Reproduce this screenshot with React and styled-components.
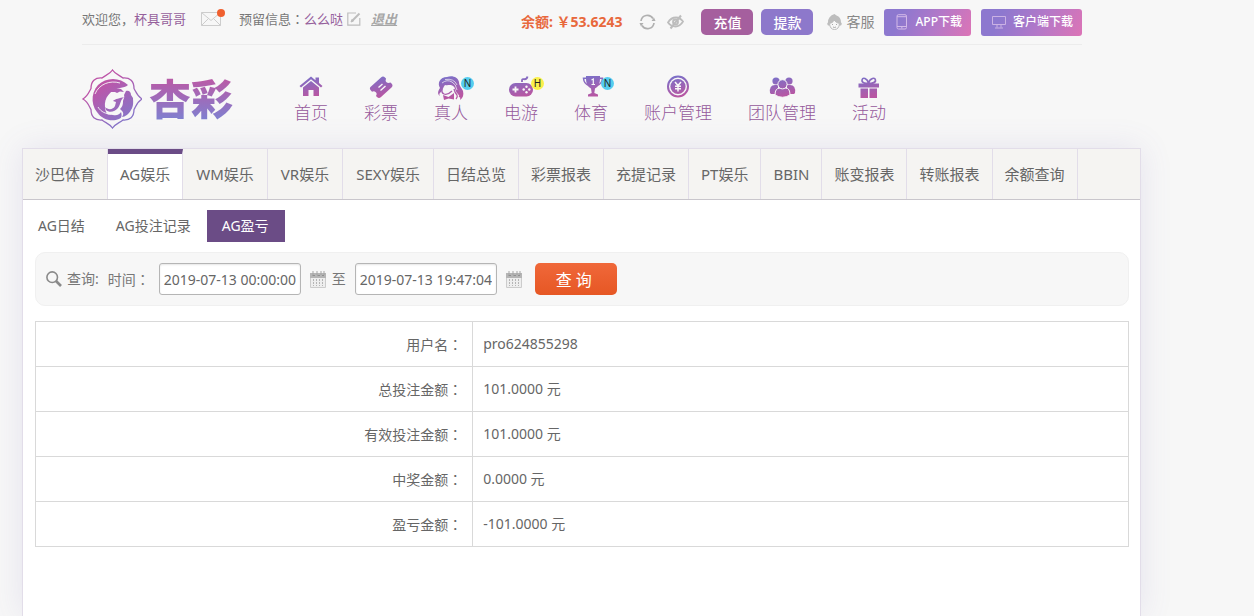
import React from "react";
import styled, { createGlobalStyle } from "styled-components";

const GlobalStyle = createGlobalStyle`
  * {
    box-sizing: border-box;
  }
  body {
    margin: 0;
    background: #f7f7f7;
    color: #666;
    font-family: "Noto Sans", "Noto Sans CJK SC", sans-serif;
    font-size: 14px;
    line-height: 20px;
  }
  a {
    color: inherit;
    text-decoration: none;
  }
  input, button {
    font-family: inherit;
  }
  svg {
    display: block;
    flex: none;
  }
`;

const Page = styled.div`
  display: flex;
  flex-direction: column;
  min-height: 100vh;
  padding: 0 113px 0 22px;
`;

const Header = styled.header`
  padding: 0 59px 0 60px;
`;

const TopBar = styled.div`
  display: flex;
  justify-content: space-between;
  height: 45px;
  border-bottom: 1px solid #ececec;
`;

const UserInfo = styled.div`
  display: flex;
  align-items: center;
  height: 38px;
  font-size: 13px;
  color: #777;
  white-space: nowrap;
`;

// full-width colon, centred in its box
const Colon = styled.span`
  font-family: "Noto Sans CJK TC", sans-serif;
`;

const Name = styled.a`
  color: #96609c;
`;

const MailLink = styled.a`
  position: relative;
  margin: 0 18px 0 15px;
`;

const MailDot = styled.span`
  position: absolute;
  top: -3px;
  right: -4px;
  width: 8px;
  height: 8px;
  border-radius: 50%;
  background: #f0602f;
`;

const EditLink = styled.a`
  margin: 0 10px 0 4px;
`;

const Logout = styled.a`
  font-style: italic;
  font-weight: bold;
  text-decoration: underline;
  color: #a6a6a6;
`;

const Actions = styled.div`
  display: flex;
  align-items: center;
  white-space: nowrap;
`;

const Balance = styled.span`
  margin-right: 17px;
  font-size: 14px;
  font-weight: bold;
  color: #e8683c;
`;

const IconButton = styled.button`
  padding: 0;
  border: 0;
  background: none;
  margin-right: ${props => props.$gap}px;
`;

const MoneyButton = styled.button`
  width: 52px;
  height: 26px;
  padding: 0;
  margin-right: ${props => props.$gap}px;
  border: 0;
  border-radius: 5px;
  background: ${props => props.$bg};
  color: #fff;
  font-size: 14px;
  font-weight: 500;
`;

const Service = styled.a`
  display: flex;
  align-items: center;
  gap: 4px;
  color: #888;
`;

const Download = styled.a`
  display: flex;
  align-items: center;
  gap: 7px;
  height: 27px;
  margin-left: 10px;
  padding: 0 9px 0 11px;
  border-radius: 3px;
  background: linear-gradient(115deg, #8d78cf 20%, #b478c8 60%, #dc74b6);
  color: #fff;
  font-size: 12px;
  font-weight: 500;
`;

const MainBar = styled.div`
  display: flex;
  align-items: flex-start;
  height: 103px;
`;

const Logo = styled.a`
  display: flex;
  align-items: center;
  gap: 7px;
  height: 60px;
  margin: 24px 43px 0 0;
`;

const LogoText = styled.span`
  font-size: 42px;
  line-height: 60px;
  font-weight: 900;
  background: linear-gradient(#b75ca8 20%, #7f80d0 85%);
  background-clip: text;
  -webkit-background-clip: text;
  color: transparent;
`;

const Nav = styled.nav`
  display: flex;
  padding-top: 30px;
`;

const NavItem = styled.a`
  position: relative;
  display: flex;
  flex-direction: column;
  align-items: center;
  padding: 0 18px;
  font-size: 17px;
  font-weight: 300;
  line-height: 24px;
  color: #95589b;
  white-space: nowrap;
`;

const Badge = styled.span`
  position: absolute;
  top: 2px;
  left: 45px;
  width: 13px;
  height: 13px;
  border-radius: 50%;
  background: ${props => (props.$hot ? "#faf04a" : "#55cdee")};
  color: #222;
  font-size: 10px;
  font-weight: 400;
  line-height: 13px;
  text-align: center;
`;

const Panel = styled.main`
  flex: 1;
  border: 1px solid #e2dde9;
  border-bottom: 0;
  background: #fff;
  box-shadow: 0 0 30px rgba(110, 90, 180, 0.13);
`;

const Tabs = styled.nav`
  display: flex;
  height: 51px;
  background: #f5f4f2;
  border-bottom: 1px solid #c9c6cc;
`;

const Tab = styled.a`
  padding: 0 ${props => (props.$wide ? 13 : 12)}px;
  border-right: 1px solid #e2dde9;
  border-top: ${props => (props.$active ? "5px solid #6b4c86" : "0")};
  background: ${props => (props.$active ? "#fff" : "none")};
  font-size: 15px;
  line-height: ${props => (props.$active ? 41 : 51)}px;
  white-space: nowrap;
`;

const SubTabs = styled.nav`
  display: flex;
  padding: 10px 0;
`;

const SubTab = styled.a`
  padding: 0 16px 0 15px;
  line-height: 32px;
  background: ${props => (props.$active ? "#6b4c86" : "none")};
  color: ${props => (props.$active ? "#fff" : "#666")};
`;

const Content = styled.div`
  padding: 0 11px 0 12px;
`;

const SearchBar = styled.form`
  display: flex;
  align-items: center;
  gap: 9px;
  height: 54px;
  padding: 0 10px;
  border: 1px solid #f0f0f0;
  border-radius: 10px;
  background: #f7f7f7;
  color: #777;
`;

const SearchTitle = styled.span`
  display: flex;
  align-items: center;
  gap: 5px;
`;

const DateField = styled.span`
  display: flex;
  align-items: center;
  gap: 9px;
  margin-right: ${props => props.$gap}px;
`;

const DateInput = styled.input`
  width: 142px;
  height: 32px;
  padding: 0 4px;
  border: 1px solid #b5b5b5;
  border-radius: 3px;
  background: #fff;
  box-shadow: inset 0 1px 2px rgba(0, 0, 0, 0.1);
  color: #666;
  font-size: 14px;
  text-align: center;
`;

const SubmitButton = styled.button`
  width: 82px;
  height: 32px;
  padding: 0 4px 0 0;
  border: 0;
  border-radius: 5px;
  background: linear-gradient(#f0683a, #e65724);
  color: #fff;
  font-size: 16px;
`;

const Report = styled.table`
  width: 100%;
  margin-top: 15px;
  border-collapse: collapse;

  th, td {
    height: 45px;
    padding: 0 10px;
    border: 1px solid #d9d9d9;
    font-weight: normal;
  }
  th {
    width: 40%;
    text-align: right;
  }
`;

const Emblem = () => (
  <svg width="60" height="60" viewBox="0 0 60 60">
    <defs>
      <linearGradient id="logo" gradientUnits="userSpaceOnUse" x1="12" y1="6" x2="46" y2="56">
        <stop offset="0.2" stopColor="#bd55a8" />
        <stop offset="1" stopColor="#8079cc" />
      </linearGradient>
    </defs>
    <path
      d="M30.500 1C33 5 37 6 41 9C48 8.500 52 12 52 19.500C54 23 55 27 60 30C55 33 54 37 52 40.500C52 48 48 51.500 41 51C37 54 33 55 30.500 59C28 55 24 54 20 51C13 51.500 9 48 9 40.500C7 37 6 33 1 30C6 27 7 23 9 19.500C9 12 13 8.500 20 9C24 6 28 5 30.500 1Z"
      fill="none"
      stroke="url(#logo)"
      strokeWidth="1.300"
    />
    <g fill="url(#logo)">
      <path d="M46 16C38 8 24 8 16 16C8 25 9 39 18 46C22 49 27 50 31 49C26 47 23 43 23 38C22 29 28 21 38 19C41 18 44 18 46 16Z" />
      <path d="M27 23C30 20 34 19 39 20L42 23L38 22.500L35 24L33 23Z" />
      <path d="M23 38C26 41 31 41 33 37L34 33L31 32C33 30 38 29 42 28C38 31 39 35 36 39C33 43 27 44 24 41Z" />
      <path d="M44 22C47 21 49 23 49 26L51 29C51 32 52 37 49 41C47 45 43 48 40 48C43 44 40 42 38 40C40 38 41 36 41 33C41 30 43 29 42 26Z" />
      <path d="M15 43C19 48 25 44 31 46C35 47 38 45 39 43C40 46 40 49 37 50C30 53 20 51 15 43Z" />
    </g>
    <path d="M13 25C17 15 28 11 38 14M16 38C19 43 24 45 29 45" fill="none" stroke="#f7f7f7" strokeWidth="0.900" />
  </svg>
);

const Gradient = () => (
  <svg width="0" height="0" style={{ position: "absolute" }} aria-hidden="true">
    <linearGradient id="nav" gradientUnits="userSpaceOnUse" x1="0" y1="1" x2="6" y2="24">
      <stop offset="0" stopColor="#7373cd" />
      <stop offset="1" stopColor="#b857a3" />
    </linearGradient>
  </svg>
);

const navIcons = {
  home: (
    <>
      <path d="M2.500 11L14 1.500L18.500 5.200V2.500H22V8L25.500 11L24 12.500L14 4.300L4 12.500Z" />
      <path d="M6 12.500L14 6L22 12.500V21H16.500V15H11.500V21H6Z" />
    </>
  ),
  ticket: (
    <>
      <path d="M14 2.500Q16 .5 18 2.500L19 3.500Q18 6 19.500 7.200Q21 8.500 23.500 7.500L24.500 8.500Q26.500 10.500 24.500 12.500L14 22Q12 23.800 10 22L9 21Q10.500 18.500 8.500 17Q7 15.500 5 16.800L3.500 15Q2 13 4 11.500Z" />
      <path d="M11.500 12.500L15.500 9M13.500 15.500L18.500 11" stroke="#f7f7f7" strokeWidth="1.400" />
    </>
  ),
  girl: (
    <>
      <path d="M3 13C0 8 3 2 10 2C15 0 21 2 22 7C22 11 25 13 26 16C27 20 26 23 23 25C24 22 22 21 21 19C18 17 19 13 16 11C13 9 11 11 8 10C6 12 6 15 4 17C2 18 2 20 3 21C0 19 1 16 3 13Z" />
      <path d="M5 14C5 16 4 18 7 19C10 20 13 18 15 16" fill="none" stroke="url(#nav)" strokeWidth="1.300" />
      <path d="M6 20L11.500 22L17 18V24.500L11.500 23.500L7 25Z" />
      <path d="M17 14Q18 18 20 20Q21 22 19 24M22 17Q25 20 22 22" fill="none" stroke="url(#nav)" strokeWidth="1.300" />
      <path d="M5 8Q10 4 15 7Q19 9 20 15M8 4.500Q17 3 20 10" fill="none" stroke="#f7f7f7" strokeWidth="0.700" />
    </>
  ),
  game: (
    <>
      <path d="M15 7V5.500Q15 3.800 17 4.200Q20 4.500 20.500 1.500" fill="none" stroke="url(#nav)" strokeWidth="1.800" />
      <rect x="2" y="8" width="24" height="13.500" rx="6.500" />
      <path d="M8.500 11.500V17.500M5.500 14.500H11.500" stroke="#f7f7f7" strokeWidth="1.800" />
      <g fill="#f7f7f7">
        <circle cx="19.500" cy="11.700" r="1.200" />
        <circle cx="19.500" cy="17.300" r="1.200" />
        <circle cx="16.700" cy="14.500" r="1.200" />
        <circle cx="22.300" cy="14.500" r="1.200" />
      </g>
    </>
  ),
  cup: (
    <>
      <path d="M9 1H23V4Q23 11 18 13.500L17.300 18L21 19.500V21.500H11V19.500L14.700 18L14 13.500Q9 11 9 4Z" />
      <path d="M9 3.200H6.500Q7 9 12 10.500M23 3.200H25.500Q25 9 20 10.500" fill="none" stroke="url(#nav)" strokeWidth="1.500" />
      <path d="M14.500 5L16.300 4V9.500M14.500 9.500H18" fill="none" stroke="#f7f7f7" strokeWidth="1.200" />
    </>
  ),
  coin: (
    <>
      <circle cx="14" cy="11.500" r="10" fill="none" stroke="url(#nav)" strokeWidth="2" />
      <circle cx="14" cy="11.500" r="7.600" />
      <path d="M11 7L14 10.500L17 7M14 10.500V16.500M11 11.200H17M11 13.700H17" fill="none" stroke="#f7f7f7" strokeWidth="1.500" />
    </>
  ),
  team: (
    <>
      <circle cx="8" cy="6" r="3.600" />
      <circle cx="21" cy="6" r="3.600" />
      <path d="M2 18Q1 10 7 10H10V19H3Z" />
      <path d="M27 18Q28 10 22 10H19V19H26Z" />
      <g stroke="#f7f7f7">
        <path d="M7 20Q7 13 12 13H17.500Q22 13 22 20Q14.500 24.500 7 20Z" />
        <circle cx="14.500" cy="9.300" r="4.600" />
      </g>
    </>
  ),
  gift: (
    <>
      <path d="M3.500 8.500H24V12.500H3.500ZM5.500 13.500H13V23H5.500ZM14.500 13.500H22V23H14.500Z" />
      <path d="M13.500 8Q8 9 7 6Q7 2.500 10 3.500Q12.500 4.500 13.500 8Q14.500 4.500 17.500 3.500Q20.500 2.500 20.500 6Q19 9 13.500 8Z" fill="none" stroke="url(#nav)" strokeWidth="1.700" />
    </>
  ),
};

const NavIcon = ({ name }) => (
  <svg width="28" height="26" viewBox="0 0 28 26" fill="url(#nav)">
    {navIcons[name]}
  </svg>
);

const MailIcon = () => (
  <svg width="20" height="14" viewBox="0 0 20 14" fill="none" stroke="#cdcdcd">
    <path d="M.5.5H19.500V13.500H.5ZM.5.5L10 8.500L19.500.5M.5 13.500L7.500 6.500M19.500 13.500L12.500 6.500" />
  </svg>
);

const EditIcon = () => (
  <svg width="14" height="14" viewBox="0 0 14 14" fill="none" stroke="#bdbdbd">
    <path d="M9 1H.8V13.200H12.800V6" strokeWidth="1.200" />
    <path d="M5 9L12.500 1.500" strokeWidth="2" />
    <path d="M4 10L5 7.500L6.500 9Z" fill="#bdbdbd" />
  </svg>
);

const RefreshIcon = () => (
  <svg width="17" height="16" viewBox="0 0 17 16" fill="none" stroke="#b0b0b0" strokeWidth="1.700">
    <path d="M2 7A6.500 6.500 0 0 1 14 4.500M15 9A6.500 6.500 0 0 1 3 11.500" />
    <path d="M12.500 7H16.500L15 3.500ZM.5 9H4.500L2 12.500Z" fill="#b0b0b0" stroke="none" />
  </svg>
);

const EyeIcon = () => (
  <svg width="17" height="16" viewBox="0 0 17 16" fill="none" stroke="#bdbdbd" strokeWidth="1.800">
    <path d="M1 8.500Q4 3.500 9 3.500Q13 3.500 16 7.500Q13 12.500 8.500 12.500Q4 12.500 1 8.500Z" />
    <circle cx="8.500" cy="8" r="2.500" />
    <path d="M3.500 14.500L14 1.500" strokeWidth="2" />
  </svg>
);

const ServiceIcon = () => (
  <svg width="15" height="17" viewBox="0 0 15 17">
    <path d="M7.500 0Q9 1 9.500 1.500Q14 3 14 8.500Q15.500 9.500 14 11.500H1Q-.5 9.500 1 8.500Q1 2 7.500 0Z" fill="#bdbdbd" />
    <path d="M2.500 9.500Q6 9 7 6Q9 9 12.500 9.500Q12 15.500 7.500 15.500Q3 15.500 2.500 9.500Z" fill="#f7f7f7" stroke="#bdbdbd" />
    <path d="M5 10.500H6M9 10.500H10M6 13Q7.500 14 9 13" fill="none" stroke="#aaa" />
  </svg>
);

const PhoneIcon = () => (
  <svg width="13" height="16" viewBox="0 0 13 16" fill="none" stroke="#d3b9e8">
    <rect x="2" y=".7" width="9.500" height="14.300" rx="1.500" />
    <path d="M2 2.700H11.500M2 12.500H11.500M6 13.800H7.500" />
  </svg>
);

const ScreenIcon = () => (
  <svg width="14" height="13" viewBox="0 0 14 13" fill="none" stroke="#cbb2e4">
    <path d="M.5.500H13.500V8.500H.5ZM5 8.500V11.500M9 8.500V11.500M3 12H11" />
  </svg>
);

const SearchIcon = () => (
  <svg width="16" height="16" viewBox="0 0 16 16" fill="none" stroke="#8a8a8a">
    <circle cx="6.200" cy="6.200" r="5.300" strokeWidth="1.600" />
    <path d="M10 10L15 15" strokeWidth="2.600" />
  </svg>
);

const CalendarIcon = () => (
  <svg width="16" height="17" viewBox="0 0 16 17">
    <path d="M0 2H16V7H0Z" fill="#b5b5b5" />
    <path d="M3 0V4M7 0V4M11 0V4M14 0V4" stroke="#a5a5a5" />
    <path d="M2.500 4.500H5M7.500 4.500H10M12 4.500H14" stroke="#8f8f8f" />
    <path d="M.5 7V16.500H15.500V7" fill="#eee" stroke="#ccc" />
    <path d="M3.500 8V15M6.500 8V15M9.500 8V15M12.500 8V15" stroke="#b5b5b5" strokeDasharray="2 1" />
  </svg>
);

const navItems = [
  { title: "首页", icon: "home" },
  { title: "彩票", icon: "ticket" },
  { title: "真人", icon: "girl", badge: "N" },
  { title: "电游", icon: "game", badge: "H" },
  { title: "体育", icon: "cup", badge: "N" },
  { title: "账户管理", icon: "coin" },
  { title: "团队管理", icon: "team" },
  { title: "活动", icon: "gift" },
];

const tabs = [
  { title: "沙巴体育" },
  { title: "AG娱乐", active: true },
  { title: "WM娱乐", wide: true },
  { title: "VR娱乐", wide: true },
  { title: "SEXY娱乐", wide: true },
  { title: "日结总览" },
  { title: "彩票报表" },
  { title: "充提记录" },
  { title: "PT娱乐" },
  { title: "BBIN" },
  { title: "账变报表" },
  { title: "转账报表" },
  { title: "余额查询" },
];

const subTabs = ["AG日结", "AG投注记录", "AG盈亏"];

const rows = [
  ["用户名", "pro624855298"],
  ["总投注金额", "101.0000 元"],
  ["有效投注金额", "101.0000 元"],
  ["中奖金额", "0.0000 元"],
  ["盈亏金额", "-101.0000 元"],
];

const App = () => {
  return (
    <>
      <GlobalStyle />
      <Gradient />
      <Page lang="zh-CN">
        <Header>
          <TopBar>
            <UserInfo>
              欢迎您，<Name href="#">杯具哥哥</Name>
              <MailLink href="#" aria-label="站内信">
                <MailIcon />
                <MailDot />
              </MailLink>
              预留信息<Colon lang="zh-TW">：</Colon><Name href="#">么么哒</Name>
              <EditLink href="#" aria-label="修改"><EditIcon /></EditLink>
              <Logout href="#">退出</Logout>
            </UserInfo>
            <Actions>
              <Balance>余额: ￥53.6243</Balance>
              <IconButton type="button" $gap={11} aria-label="刷新"><RefreshIcon /></IconButton>
              <IconButton type="button" $gap={17} aria-label="隐藏"><EyeIcon /></IconButton>
              <MoneyButton type="button" $gap={8} $bg="#a55f9e">充值</MoneyButton>
              <MoneyButton type="button" $gap={14} $bg="#8d78cb">提款</MoneyButton>
              <Service href="#"><ServiceIcon />客服</Service>
              <Download href="#"><PhoneIcon />APP下载</Download>
              <Download href="#"><ScreenIcon />客户端下载</Download>
            </Actions>
          </TopBar>
          <MainBar>
            <Logo href="#">
              <Emblem />
              <LogoText>杏彩</LogoText>
            </Logo>
            <Nav>
              {navItems.map(item => (
                <NavItem href="#" key={item.title}>
                  <NavIcon name={item.icon} />
                  {item.title}
                  {item.badge && <Badge $hot={item.badge === "H"}>{item.badge}</Badge>}
                </NavItem>
              ))}
            </Nav>
          </MainBar>
        </Header>
        <Panel>
          <Tabs>
            {tabs.map(tab => (
              <Tab href="#" key={tab.title} $active={tab.active} $wide={tab.wide}>{tab.title}</Tab>
            ))}
          </Tabs>
          <SubTabs>
            {subTabs.map(tab => (
              <SubTab href="#" key={tab} $active={tab === "AG盈亏"}>{tab}</SubTab>
            ))}
          </SubTabs>
          <Content>
            <SearchBar>
              <SearchTitle><SearchIcon />查询:</SearchTitle>
              <label htmlFor="start">时间<Colon lang="zh-TW">：</Colon></label>
              <DateField $gap={-3}>
                <DateInput id="start" defaultValue="2019-07-13 00:00:00" />
                <CalendarIcon />
              </DateField>
              <label htmlFor="end">至</label>
              <DateField $gap={4}>
                <DateInput id="end" defaultValue="2019-07-13 19:47:04" />
                <CalendarIcon />
              </DateField>
              <SubmitButton type="button">查 询</SubmitButton>
            </SearchBar>
            <Report>
              <tbody>
                {rows.map(([title, value]) => (
                  <tr key={title}>
                    <th scope="row">{title}<Colon lang="zh-TW">：</Colon></th>
                    <td>{value}</td>
                  </tr>
                ))}
              </tbody>
            </Report>
          </Content>
        </Panel>
      </Page>
    </>
  );
};

export default App;
